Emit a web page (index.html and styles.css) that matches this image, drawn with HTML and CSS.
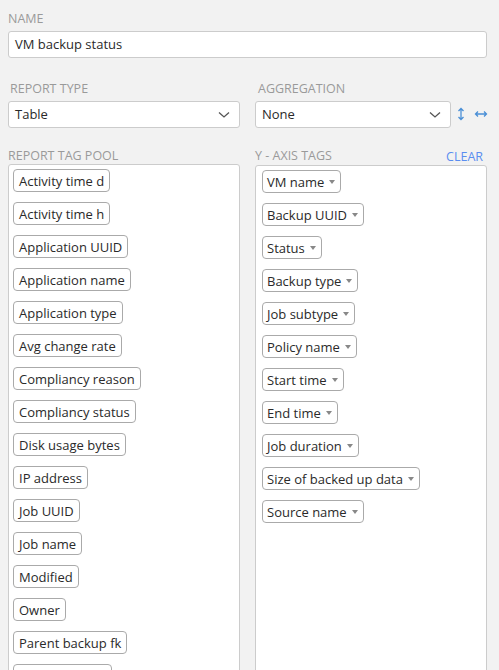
FILE: index.html
```html
<!DOCTYPE html>
<html>
<head>
<meta charset="utf-8">
<link rel="stylesheet" href="styles.css">
</head>
<body>
<div class="page">
  <div class="field">
    <div class="label">NAME</div>
    <div class="input">VM backup status</div>
  </div>
  <div class="row2">
    <div class="col">
      <div class="label">REPORT TYPE</div>
      <div class="select">Table<svg class="chev" width="12" height="8" viewBox="0 0 12 8"><path d="M1 1.5 L6 6 L11 1.5" fill="none" stroke="#555" stroke-width="1.3"/></svg></div>
    </div>
    <div class="col right">
      <div class="label">AGGREGATION</div>
      <div class="selrow">
        <div class="select agg">None<svg class="chev" width="12" height="8" viewBox="0 0 12 8"><path d="M1 1.5 L6 6 L11 1.5" fill="none" stroke="#555" stroke-width="1.3"/></svg></div>
        <svg class="ico" width="8" height="14" viewBox="0 0 8 14"><path d="M4 1.5 V12.5 M1.5 4 L4 1.5 L6.5 4 M1.5 10 L4 12.5 L6.5 10" fill="none" stroke="#4a8fd6" stroke-width="1.3"/></svg>
        <svg class="ico h" width="14" height="8" viewBox="0 0 14 8"><path d="M1.5 4 H12.5 M4 1.5 L1.5 4 L4 6.5 M10 1.5 L12.5 4 L10 6.5" fill="none" stroke="#4a8fd6" stroke-width="1.3"/></svg>
      </div>
    </div>
  </div>
  <div class="row3">
    <div class="col">
      <div class="label">REPORT TAG POOL</div>
      <div class="box">
        <span class="tag">Activity time d</span>
        <span class="tag">Activity time h</span>
        <span class="tag">Application UUID</span>
        <span class="tag">Application name</span>
        <span class="tag">Application type</span>
        <span class="tag">Avg change rate</span>
        <span class="tag">Compliancy reason</span>
        <span class="tag">Compliancy status</span>
        <span class="tag">Disk usage bytes</span>
        <span class="tag">IP address</span>
        <span class="tag">Job UUID</span>
        <span class="tag">Job name</span>
        <span class="tag">Modified</span>
        <span class="tag">Owner</span>
        <span class="tag">Parent backup fk</span>
        <span class="tag">Policy name id</span>
      </div>
    </div>
    <div class="col">
      <div class="labelrow"><span class="label">Y - AXIS TAGS</span><span class="clear">CLEAR</span></div>
      <div class="box">
        <span class="tag dd">VM name<i class="caret"></i></span>
        <span class="tag dd">Backup UUID<i class="caret"></i></span>
        <span class="tag dd">Status<i class="caret"></i></span>
        <span class="tag dd">Backup type<i class="caret"></i></span>
        <span class="tag dd">Job subtype<i class="caret"></i></span>
        <span class="tag dd">Policy name<i class="caret"></i></span>
        <span class="tag dd">Start time<i class="caret"></i></span>
        <span class="tag dd">End time<i class="caret"></i></span>
        <span class="tag dd">Job duration<i class="caret"></i></span>
        <span class="tag dd">Size of backed up data<i class="caret"></i></span>
        <span class="tag dd">Source name<i class="caret"></i></span>
      </div>
    </div>
  </div>
</div>
</body>
</html>
```
FILE: styles.css
```css
html, body {
  margin: 0;
  padding: 0;
  background: #f2f2f2;
  height: 100%;
  overflow: hidden;
}
body {
  font-family: "Open Sans", "Liberation Sans", sans-serif;
  color: #333;
}
.page {
  padding: 10px 12px 0 8px;
}
.label {
  font-size: 12.5px;
  color: #9a9a9a;
  line-height: 17px;
}
.input, .select {
  background: #fff;
  border: 1px solid #ccc;
  border-radius: 3px;
  height: 25px;
  font-size: 13px;
  line-height: 25px;
  padding: 0 6px;
  margin-top: 4px;
  color: #2a2a2a;
}
.row2 {
  display: flex;
  gap: 15px;
  margin-top: 22px;
}
.row2 .col { width: 232px; flex: none; }
.row2 .col .label { padding-left: 2px; }
.row2 .col.right .label { padding-left: 3px; }
.row2 .col.right { width: 240px; }
.select {
  display: flex;
  justify-content: space-between;
  align-items: center;
  padding-right: 9px;
}
.selrow {
  display: flex;
  align-items: center;
}
.agg { width: 179px; flex: none; }
.ico { margin-left: 6px; margin-top: 2px; flex: none; }
.ico.h { margin-left: 9px; }
.row3 {
  display: flex;
  gap: 15px;
  margin-top: 19px;
}
.row3 .col { width: 232px; flex: none; }
.labelrow {
  display: flex;
  justify-content: space-between;
  padding-right: 4px;
}
.clear {
  color: #5b8ef0;
  font-size: 12.5px;
  line-height: 17px;
  margin-top: 1px;
}
.box {
  background: #fff;
  border: 1px solid #ccc;
  border-radius: 3px;
  margin-top: 0;
  height: 600px;
  padding: 4px 4px 0 4px;
  display: flex;
  flex-direction: column;
  align-items: flex-start;
  gap: 10px;
}
.tag {
  display: inline-flex;
  align-items: center;
  border: 1px solid #aaa;
  border-radius: 4px;
  height: 21px;
  padding: 0 5px;
  font-size: 13px;
  color: #2a2a2a;
  background: #fff;
  white-space: nowrap;
}
.tag.dd {
  padding: 0 5px 0 4px;
  margin-left: 2px;
}
.caret {
  display: inline-block;
  width: 0;
  height: 0;
  border-left: 3.5px solid transparent;
  border-right: 3.5px solid transparent;
  border-top: 4px solid #888;
  margin-left: 5px;
  margin-top: 1px;
}
```
